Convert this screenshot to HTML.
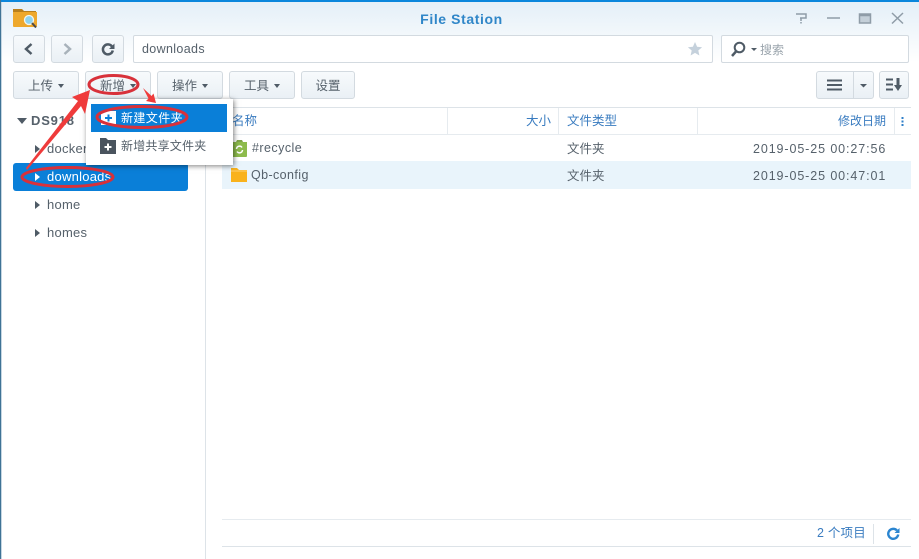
<!DOCTYPE html>
<html><head><meta charset="utf-8"><style>
*{box-sizing:border-box}
html,body{margin:0;padding:0}
body{width:919px;height:559px;overflow:hidden;position:relative;background:#fff;font-family:"Liberation Sans","Noto Sans CJK SC",sans-serif;color:#4f5b66;font-size:13px}
.a{position:absolute;white-space:nowrap}
.btn{position:absolute;top:71px;height:28px;border:1px solid #d3dae0;border-radius:3px;background:linear-gradient(#f7fafc,#eaf0f5);text-align:center;line-height:29px;font-size:12.5px;color:#56616b}
.car{display:inline-block;width:0;height:0;border:3.5px solid transparent;border-top:4px solid #4f5b66;border-bottom:0;margin-left:5px;vertical-align:2px}
.tri{position:absolute;width:0;height:0;border:4px solid transparent;border-left:5px solid #4f5b66;border-right:0}
.tree{position:absolute;left:47px;font-size:13px;color:#56616b;letter-spacing:.25px}
.hd{position:absolute;top:110px;font-size:12.5px;color:#3a7cc0}
.cell{position:absolute;font-size:12.5px;color:#56616b}
</style></head><body>
<div class="a" style="left:0;top:0;width:919px;height:70px;background:linear-gradient(#e4eff8 2px,#eef5fa 25px,#fff 62px)"></div>
<div class="a" style="left:0;top:0;width:919px;height:2px;background:#0a86dc"></div>
<div class="a" style="left:0;top:0;width:1px;height:559px;background:#3f7396"></div>
<div class="a" style="left:1px;top:2px;width:1px;height:557px;background:#c5d6e2"></div>

<svg class="a" style="left:13px;top:8px" width="25" height="21" viewBox="0 0 25 21"><path d="M0 1h9l2 2h12v4H0z" fill="#b97f1c"/><path d="M0 4h24v14a1 1 0 0 1-1 1H1a1 1 0 0 1-1-1z" fill="#eea82c"/><circle cx="16" cy="12" r="4.500" fill="#8fd3ef" stroke="#f2f6f0" stroke-width="1.300"/><path d="M19 15l4 4.500" stroke="#4a4a4a" stroke-width="2"/></svg>
<div class="a" style="left:0;width:923px;top:11px;text-align:center;font-weight:bold;font-size:14px;color:#2f86c8;letter-spacing:.6px">File Station</div>

<svg class="a" style="left:790px;top:8px" width="125" height="20" viewBox="0 0 125 20" fill="none" stroke="#8f9ca7" stroke-width="1.500"><path d="M6 6h10v4h-6M11 10v3M11 14v1.500"/><path d="M37 10h13"/><rect x="69.500" y="6" width="11" height="9" fill="#c4cfd8"/><path d="M69 7h12" stroke-width="2.500"/><path d="M102 5l11 10.500M113 5l-11 10.500"/></svg>

<div class="btn" style="left:13px;top:35px;width:32px"></div>
<svg class="a" style="left:13px;top:35px" width="32" height="28" fill="none" stroke="#4f5b66" stroke-width="2.500"><path d="M18.500 9l-5.500 5 5.500 5"/></svg>
<div class="btn" style="left:51px;top:35px;width:32px"></div>
<svg class="a" style="left:51px;top:35px" width="32" height="28" fill="none" stroke="#a8b2ba" stroke-width="2.500"><path d="M13.500 9l5.500 5-5.500 5"/></svg>
<div class="btn" style="left:92px;top:35px;width:32px"></div>
<svg class="a" style="left:92px;top:35px" width="32" height="28" fill="none"><path d="M20 11.500a5 5 0 1 0 .8 4" stroke="#4f5b66" stroke-width="2.500"/><path d="M22.500 8.500v5.500h-5.500z" fill="#4f5b66"/></svg>

<div class="a" style="left:133px;top:35px;width:580px;height:28px;border:1px solid #d3dae0;background:#fff;border-radius:2px;padding-left:8px;line-height:26px;font-size:12.5px;color:#56616b;letter-spacing:.35px">downloads</div>
<svg class="a" style="left:687px;top:41px" width="16" height="16" viewBox="0 0 16 16"><path d="M8 1l2.100 4.700 5 .5-3.800 3.300 1.100 5L8 11.900 3.600 14.500l1.100-5L.9 6.200l5-.5z" fill="#c5d1dc"/></svg>

<div class="a" style="left:721px;top:35px;width:188px;height:28px;border:1px solid #d3dae0;background:#fff;border-radius:2px"></div>
<svg class="a" style="left:729px;top:41px" width="30" height="17" fill="none"><circle cx="10.500" cy="6.500" r="4.800" stroke="#4f5b66" stroke-width="2"/><path d="M7 10.500l-4 4.500" stroke="#4f5b66" stroke-width="2.500"/><path d="M22 7h6l-3 3z" fill="#4f5b66"/></svg>
<div class="a" style="left:760px;top:41px;font-size:12px;color:#9aa4ac">搜索</div>

<div class="btn" style="left:13px;width:66px">上传<span class="car"></span></div>
<div class="btn" style="left:85px;width:66px">新增<span class="car"></span></div>
<div class="btn" style="left:157px;width:66px">操作<span class="car"></span></div>
<div class="btn" style="left:229px;width:66px">工具<span class="car"></span></div>
<div class="btn" style="left:301px;width:54px">设置</div>

<div class="btn" style="left:816px;width:58px"></div>
<div class="a" style="left:853px;top:72px;width:1px;height:26px;background:#d3dae0"></div>
<svg class="a" style="left:826px;top:79px" width="44" height="13"><path d="M1 1.500h15M1 6h15M1 10.500h15" stroke="#4f5b66" stroke-width="2"/><path d="M34 5h7l-3.500 3.500z" fill="#4f5b66"/></svg>
<div class="btn" style="left:879px;width:30px"></div>
<svg class="a" style="left:885px;top:78px" width="18" height="14"><path d="M1 1.500h7M1 6.500h7M1 11.500h7" stroke="#4f5b66" stroke-width="2"/><path d="M13 0v8" stroke="#4f5b66" stroke-width="3"/><path d="M9 7h8l-4 6z" fill="#4f5b66"/></svg>

<!-- sidebar -->
<div class="a" style="left:205px;top:107px;width:1px;height:452px;background:#dde3e8"></div>
<div class="a" style="left:17px;top:118px;width:0;height:0;border:5px solid transparent;border-top:6px solid #4f5b66;border-bottom:0"></div>
<div class="a" style="left:31px;top:113px;font-weight:bold;font-size:13px;color:#56616b;letter-spacing:.8px">DS918</div>
<div class="tri" style="left:35px;top:145px"></div><div class="tree" style="top:141px">docker</div>
<div class="a" style="left:13px;top:163px;width:175px;height:28px;background:#0a7fd8;border-radius:3px"></div>
<div class="tri" style="left:35px;top:173px;border-left-color:#fff"></div><div class="tree" style="top:169px;color:#fff">downloads</div>
<div class="tri" style="left:35px;top:201px"></div><div class="tree" style="top:197px">home</div>
<div class="tri" style="left:35px;top:229px"></div><div class="tree" style="top:225px">homes</div>

<!-- table -->
<div class="a" style="left:222px;top:107px;width:689px;height:1px;background:#dde3e8"></div>
<div class="a" style="left:222px;top:134px;width:689px;height:1px;background:#e6ebef"></div>
<div class="a" style="left:447px;top:108px;width:1px;height:26px;background:#e6ebef"></div>
<div class="a" style="left:558px;top:108px;width:1px;height:26px;background:#e6ebef"></div>
<div class="a" style="left:697px;top:108px;width:1px;height:26px;background:#e6ebef"></div>
<div class="a" style="left:894px;top:108px;width:1px;height:26px;background:#e6ebef"></div>
<div class="hd" style="left:232px">名称</div>
<div class="hd" style="left:526px">大小</div>
<div class="hd" style="left:567px">文件类型</div>
<div class="hd" style="left:838px;top:112px;font-size:12px">修改日期</div>
<svg class="a" style="left:900px;top:116px" width="5" height="11"><path d="M2.500 1v2M2.500 4.500v2M2.500 8v2" stroke="#2f7fc8" stroke-width="2"/></svg>

<div class="a" style="left:222px;top:161px;width:689px;height:28px;background:#e9f4fb"></div>
<svg class="a" style="left:232px;top:140px" width="15" height="17" viewBox="0 0 15 17"><path d="M5 0h5l1 2H4z" fill="#7ea34a"/><path d="M0 2h15v14a1 1 0 0 1-1 1H1a1 1 0 0 1-1-1z" fill="#8dbb4c"/><path d="M4.500 9a3 3 0 0 1 5.500-1.500M10.500 10a3 3 0 0 1-5.500 1.500" stroke="#fff" stroke-width="1.500" fill="none"/></svg>
<div class="cell" style="left:252px;top:141px;letter-spacing:.45px">#recycle</div>
<div class="cell" style="left:567px;top:138px">文件夹</div>
<div class="cell" style="left:753px;top:142px;letter-spacing:.9px">2019-05-25 00:27:56</div>
<svg class="a" style="left:231px;top:168px" width="16" height="14" viewBox="0 0 16 14"><path d="M0 0h6l2 2h8v12H0z" fill="#f9b21c"/><path d="M0 3h16" stroke="#fdd176"/></svg>
<div class="cell" style="left:251px;top:168px;letter-spacing:.4px">Qb-config</div>
<div class="cell" style="left:567px;top:165px">文件夹</div>
<div class="cell" style="left:753px;top:169px;letter-spacing:.9px">2019-05-25 00:47:01</div>

<!-- footer -->
<div class="a" style="left:222px;top:519px;width:689px;height:1px;background:#e6ebef"></div>
<div class="a" style="left:222px;top:546px;width:689px;height:1px;background:#dde3e8"></div>
<div class="a" style="left:817px;top:522px;font-size:12.500px;color:#3a7cc0;letter-spacing:.2px">2 个项目</div>
<div class="a" style="left:873px;top:524px;width:1px;height:20px;background:#dde3e8"></div>
<svg class="a" style="left:886px;top:526px" width="15" height="15" fill="none"><path d="M11 4.500a5 5 0 1 0 1.200 4" stroke="#2b85d0" stroke-width="2.400"/><path d="M13.500 2v5h-5z" fill="#2b85d0"/></svg>

<!-- menu -->
<div class="a" style="left:86px;top:99px;width:147px;height:66px;background:#fff;box-shadow:1px 1px 5px rgba(0,0,0,.5)"></div>
<div class="a" style="left:91px;top:104px;width:136px;height:28px;background:#0a7fd8"></div>
<svg class="a" style="left:101px;top:111px" width="15" height="14"><path d="M0 0h15v14H0z" fill="#fff"/><path d="M7.500 3.500v7M4 7h7" stroke="#0a7fd8" stroke-width="2"/></svg>
<div class="a" style="left:121px;top:109px;color:#fff;font-size:12px;letter-spacing:.4px">新建文件夹</div>
<svg class="a" style="left:100px;top:138px" width="16" height="16"><path d="M0 0h6l2 2h8v14H0z" fill="#4a545e"/><path d="M8 5.500v7M4.500 9h7" stroke="#fff" stroke-width="2"/></svg>
<div class="a" style="left:121px;top:137px;font-size:12px;color:#56616b;letter-spacing:.2px">新增共享文件夹</div>

<!-- annotations -->
<svg class="a" style="left:0;top:0" width="919" height="559" fill="none">
<ellipse cx="113.500" cy="84.500" rx="24.500" ry="9" stroke="#d8313a" stroke-width="3"/>
<ellipse cx="142" cy="117" rx="45" ry="10.500" stroke="#d8313a" stroke-width="3"/>
<ellipse cx="67.500" cy="177" rx="45.500" ry="9.500" stroke="#d8313a" stroke-width="3"/>
<path d="M26 168L78 101l-6-4 18-7-5 24-4-8-54 64z" fill="#ef3b3b"/>
<path d="M143 88l8.500 8 2-2.500 2.500 9.500-10-2 2.500-2.500z" fill="#ef3b3b"/>
</svg>
</body></html>
